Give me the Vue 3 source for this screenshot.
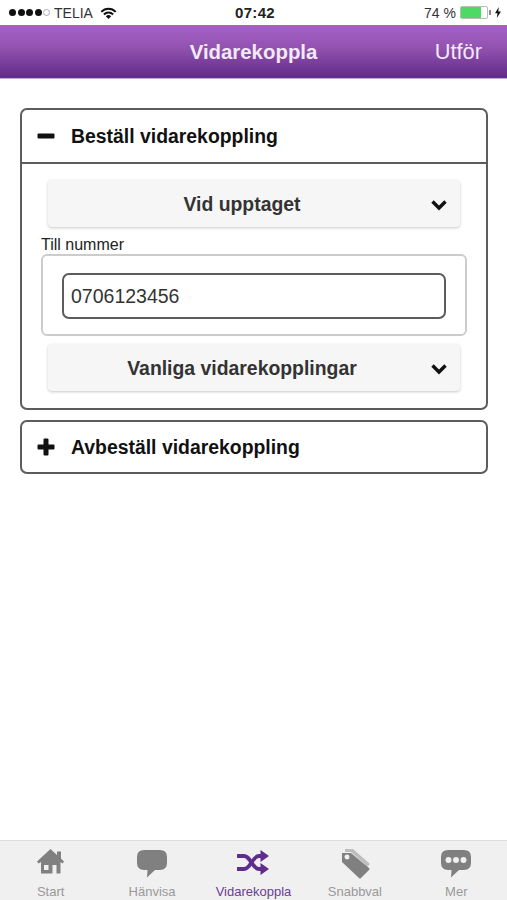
<script setup>
const tabs = [
  { label: 'Start', icon: 'home' },
  { label: 'Hänvisa', icon: 'bubble' },
  { label: 'Vidarekoppla', icon: 'shuffle', active: true },
  { label: 'Snabbval', icon: 'tag' },
  { label: 'Mer', icon: 'more' }
]
</script>

<template>
  <div class="page">
    <div class="status">
      <div class="status-left">
        <span class="signal">
          <i class="dot"></i><i class="dot"></i><i class="dot"></i><i class="dot"></i><i class="dot empty"></i>
        </span>
        <span class="carrier">TELIA</span>
        <svg class="wifi" width="17" height="12" viewBox="0 0 17 12">
          <path d="M0.6 4.2A11 11 0 0 1 16.4 4.2L15 5.6A9 9 0 0 0 2 5.6Z" fill="#111" />
          <path d="M3.2 6.8A7.4 7.4 0 0 1 13.8 6.8L12.4 8.2A5.4 5.4 0 0 0 4.6 8.2Z" fill="#111" />
          <path d="M5.8 9.3A3.8 3.8 0 0 1 11.2 9.3L8.5 12Z" fill="#111" />
        </svg>
      </div>
      <div class="clock">07:42</div>
      <div class="status-right">
        <span class="percent">74 %</span>
        <span class="battery"><span class="battery-fill"></span></span>
        <span class="battery-tip"></span>
        <svg class="bolt" width="6" height="11" viewBox="0 0 6 11">
          <path d="M3.8 0L0 6.2H2.5L1.8 11L6 4.4H3.3Z" fill="#111" />
        </svg>
      </div>
    </div>

    <header class="navbar">
      <h1 class="nav-title">Vidarekoppla</h1>
      <span class="nav-action">Utför</span>
    </header>

    <main class="content">
      <section class="card">
        <div class="card-head open">
          <svg class="head-icon" width="18" height="18" viewBox="0 0 18 18">
            <rect x="0.5" y="6.5" width="17" height="5" rx="1" fill="#111" />
          </svg>
          <span>Beställ vidarekoppling</span>
        </div>
        <div class="card-body">
          <div class="select">
            <span>Vid upptaget</span>
            <svg class="chevron" width="18" height="12" viewBox="0 0 18 12">
              <path d="M2.5 2.5L9 9L15.5 2.5" fill="none" stroke="#111" stroke-width="3.4" />
            </svg>
          </div>
          <label class="field-label">Till nummer</label>
          <div class="field-box">
            <div class="input">0706123456</div>
          </div>
          <div class="select second">
            <span>Vanliga vidarekopplingar</span>
            <svg class="chevron" width="18" height="12" viewBox="0 0 18 12">
              <path d="M2.5 2.5L9 9L15.5 2.5" fill="none" stroke="#111" stroke-width="3.4" />
            </svg>
          </div>
        </div>
      </section>

      <section class="card">
        <div class="card-head">
          <svg class="head-icon" width="18" height="18" viewBox="0 0 18 18">
            <path d="M6.5 1.5a1 1 0 0 1 1-1h3a1 1 0 0 1 1 1v5h5a1 1 0 0 1 1 1v3a1 1 0 0 1-1 1h-5v5a1 1 0 0 1-1 1h-3a1 1 0 0 1-1-1v-5h-5a1 1 0 0 1-1-1v-3a1 1 0 0 1 1-1h5z" fill="#111" />
          </svg>
          <span>Avbeställ vidarekoppling</span>
        </div>
      </section>
    </main>

    <nav class="tabbar">
      <div v-for="tab in tabs" :key="tab.label" :class="['tab', { active: tab.active }]">
        <svg class="tab-icon" width="32" height="32" viewBox="0 0 32 32">
          <path
            v-if="tab.icon === 'home'"
            d="M15.5 1L22 7V3.5H26V10.5L29 13.5L27.5 15.5L25.5 14V25.5H6V14L3.5 15.5L2 13.5ZM9 17V22H13.5V17ZM17.5 17V25.5H21.5V17Z"
            fill="#808080"
            fill-rule="evenodd"
          />
          <path
            v-else-if="tab.icon === 'bubble'"
            d="M8 2H24Q31 2 31 9V15Q31 22 24 22H19L11 29.5L11.5 22H8Q1 22 1 15V9Q1 2 8 2Z"
            fill="#808080"
          />
          <g
            v-else-if="tab.icon === 'shuffle'"
            fill="none"
            stroke="#5f2d8c"
            stroke-width="3.8"
          >
            <path d="M0 8H7C14 8 15 21 22 21H26" />
            <path d="M0 21H7C14 21 15 8 22 8H26" />
            <path d="M23.5 2L32 8L23.5 14Z" fill="#5f2d8c" stroke="none" />
            <path d="M23.5 15L32 21L23.5 27Z" fill="#5f2d8c" stroke="none" />
          </g>
          <g v-else-if="tab.icon === 'tag'">
            <path d="M6 1H14L31 16L28.5 18.5L12 4H6Z" fill="#bdbdbd" />
            <path
              d="M3 5H12L30 20Q31 21 30 22L22 30Q21 31 20 30L3 14ZM8 6.5A2.5 2.5 0 1 0 8.01 11.5A2.5 2.5 0 1 0 8 6.5Z"
              fill="#808080"
              fill-rule="evenodd"
            />
          </g>
          <g v-else>
            <path
              d="M8 2H24Q31 2 31 9V15Q31 22 24 22H19L11 29.5L11.5 22H8Q1 22 1 15V9Q1 2 8 2Z"
              fill="#808080"
            />
            <circle cx="8.5" cy="12" r="3" fill="#f0f0f0" />
            <circle cx="16" cy="12" r="3" fill="#f0f0f0" />
            <circle cx="23.5" cy="12" r="3" fill="#f0f0f0" />
          </g>
        </svg>
        <span class="tab-label">{{ tab.label }}</span>
      </div>
    </nav>
  </div>
</template>

<style scoped>
.page {
  width: 507px;
  height: 900px;
  display: flex;
  flex-direction: column;
  background: #fff;
  font-family: "Liberation Sans", Arial, sans-serif;
  overflow: hidden;
}
.status {
  height: 25px;
  padding: 0 6px 0 9px;
  display: grid;
  grid-template-columns: 1fr auto 1fr;
  align-items: center;
  color: #333;
  font-size: 14px;
  box-sizing: border-box;
}
.status-left {
  display: flex;
  align-items: center;
}
.signal {
  display: flex;
  gap: 1.5px;
}
.dot {
  width: 7px;
  height: 7px;
  border-radius: 50%;
  background: #111;
  box-sizing: border-box;
}
.dot.empty {
  background: transparent;
  border: 1px solid #aaa;
}
.carrier {
  margin-left: 4px;
}
.wifi {
  margin-left: 7px;
}
.clock {
  font-weight: 700;
  font-size: 15px;
  letter-spacing: 0.3px;
  color: #222;
}
.status-right {
  display: flex;
  align-items: center;
  justify-content: flex-end;
}
.percent {
  margin-right: 4px;
}
.battery {
  width: 28px;
  height: 13px;
  border: 1px solid #bbb;
  border-radius: 2px;
  box-sizing: border-box;
  background: #fff;
  display: block;
}
.battery-fill {
  display: block;
  width: 20px;
  height: 100%;
  background: #4cd964;
}
.battery-tip {
  width: 2px;
  height: 5px;
  margin-left: 1px;
  background: #888;
}
.bolt {
  margin-left: 4px;
}
.navbar {
  height: 54px;
  flex-shrink: 0;
  padding-top: 2px;
  display: flex;
  align-items: center;
  justify-content: center;
  position: relative;
  background: linear-gradient(#a660c4, #9454b2 40%, #602b86);
  border-bottom: 1px solid #c9a8d8;
  box-sizing: border-box;
  color: #f4e9f8;
}
.nav-title {
  margin: 0;
  font-size: 20.4px;
  font-weight: 700;
}
.nav-action {
  position: absolute;
  right: 25px;
  top: 14px;
  font-size: 21.8px;
}
.content {
  flex: 1;
  padding: 29px 19px 0 20px;
  display: flex;
  flex-direction: column;
  gap: 10px;
}
.card {
  border: 2px solid #5c5c5c;
  border-radius: 7px;
}
.card-head {
  height: 50px;
  display: flex;
  align-items: center;
  padding-left: 15px;
  gap: 16px;
  font-size: 19.4px;
  font-weight: 700;
  color: #111;
}
.card-head.open {
  height: 52px;
  border-bottom: 2px solid #5c5c5c;
}
.card-body {
  padding: 16px 19px 17px 19px;
  display: flex;
  flex-direction: column;
}
.select {
  height: 47px;
  margin: 0 7px;
  padding: 2px 24px 0 0;
  position: relative;
  display: flex;
  align-items: center;
  justify-content: center;
  background: #f6f6f6;
  border-radius: 4px;
  box-shadow: 0 1px 3px rgba(0, 0, 0, 0.22);
  font-size: 19.4px;
  font-weight: 700;
  color: #333;
  box-sizing: border-box;
}
.select.second {
  margin-top: 8px;
}
.chevron {
  position: absolute;
  right: 12px;
  top: 19px;
}
.field-label {
  margin-top: 9px;
  height: 18px;
  line-height: 17px;
  font-size: 16px;
  color: #222;
}
.field-box {
  height: 82px;
  padding: 17px 19px;
  border: 2px solid #ccc;
  border-radius: 6px;
  box-sizing: border-box;
}
.input {
  height: 46px;
  padding: 1px 0 0 7px;
  display: flex;
  align-items: center;
  border: 2px solid #5c5c5c;
  border-radius: 7px;
  box-sizing: border-box;
  font-size: 19.5px;
  color: #333;
}
.tabbar {
  height: 60px;
  flex-shrink: 0;
  display: grid;
  grid-template-columns: repeat(5, 1fr);
  background: #f0f0f0;
  border-top: 1px solid #ddd;
  box-sizing: border-box;
}
.tab {
  display: flex;
  flex-direction: column;
  align-items: center;
  padding-top: 7px;
  color: #999;
}
.tab-icon {
  display: block;
  width: 32px;
  height: 32px;
}
.tab-label {
  margin-top: 4px;
  font-size: 13px;
  line-height: 15px;
}
.tab.active {
  color: #6b3d96;
}
</style>
